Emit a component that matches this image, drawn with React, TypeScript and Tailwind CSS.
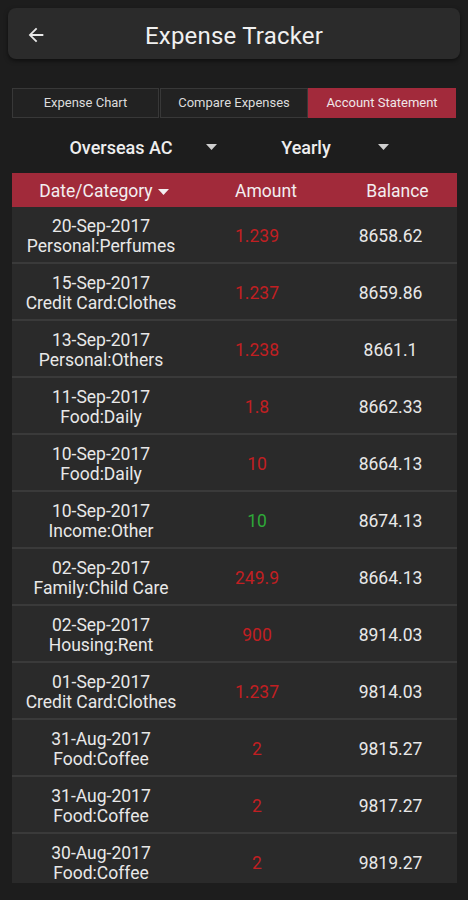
import React from 'react';

const rows = [
  { date: '20-Sep-2017', cat: 'Personal:Perfumes', amount: '1.239', income: false, balance: '8658.62' },
  { date: '15-Sep-2017', cat: 'Credit Card:Clothes', amount: '1.237', income: false, balance: '8659.86' },
  { date: '13-Sep-2017', cat: 'Personal:Others', amount: '1.238', income: false, balance: '8661.1' },
  { date: '11-Sep-2017', cat: 'Food:Daily', amount: '1.8', income: false, balance: '8662.33' },
  { date: '10-Sep-2017', cat: 'Food:Daily', amount: '10', income: false, balance: '8664.13' },
  { date: '10-Sep-2017', cat: 'Income:Other', amount: '10', income: true, balance: '8674.13' },
  { date: '02-Sep-2017', cat: 'Family:Child Care', amount: '249.9', income: false, balance: '8664.13' },
  { date: '02-Sep-2017', cat: 'Housing:Rent', amount: '900', income: false, balance: '8914.03' },
  { date: '01-Sep-2017', cat: 'Credit Card:Clothes', amount: '1.237', income: false, balance: '9814.03' },
  { date: '31-Aug-2017', cat: 'Food:Coffee', amount: '2', income: false, balance: '9815.27' },
  { date: '31-Aug-2017', cat: 'Food:Coffee', amount: '2', income: false, balance: '9817.27' },
  { date: '30-Aug-2017', cat: 'Food:Coffee', amount: '2', income: false, balance: '9819.27' },
];

const Caret = ({ className }: { className?: string }) => (
  <svg width="11" height="6" viewBox="0 0 11 6" className={className}>
    <path d="M0 0 L11 0 L5.5 6 Z" fill="currentColor" />
  </svg>
);

export default function App() {
  return (
    <div
      className="w-[468px] h-[900px] bg-[#1d1d1d] text-[#e8e8e8] overflow-hidden"
      style={{ fontFamily: 'Roboto, "Liberation Sans", sans-serif' }}
    >
      {/* toolbar */}
      <div className="pt-[8px] px-[8px]">
        <div className="h-[51px] rounded-[8px] bg-[#2b2b2b] shadow-[0_2px_4px_rgba(0,0,0,0.5)] flex items-center relative">
          <svg width="22" height="22" viewBox="0 0 24 24" className="ml-[17px] mt-[2px] text-[#e8e8e8]">
            <path d="M20 11H7.83l5.59-5.59L12 4l-8 8 8 8 1.41-1.41L7.83 13H20v-2z" fill="currentColor" />
          </svg>
          <div className="absolute inset-0 pt-[4px] flex items-center justify-center text-[24px] text-[#f0f0f0] tracking-[0.2px]">
            Expense Tracker
          </div>
        </div>
      </div>

      {/* tabs */}
      <div className="mt-[29px] mx-[12px] flex h-[30px] text-[13px]">
        <div className="w-[147px] flex items-center justify-center border border-[#383838] bg-[#222222] text-[#dcdcdc]">
          Expense Chart
        </div>
        <div className="w-[148px] ml-[1px] flex items-center justify-center border border-[#383838] bg-[#222222] text-[#dcdcdc]">
          Compare Expenses
        </div>
        <div className="flex-1 flex items-center justify-center bg-[#a22a3b] text-[#f0e6e8]">
          Account Statement
        </div>
      </div>

      {/* spinners */}
      <div className="h-[55px] pt-[3px] flex items-center text-[18px] font-medium text-[#eeeeee]">
        <div className="ml-[40px] w-[162px] text-center">Overseas AC</div>
        <Caret className="ml-[4px] text-[#cfcfcf]" />
        <div className="ml-[20px] w-[138px] text-center">Yearly</div>
        <Caret className="ml-[3px] text-[#cfcfcf]" />
      </div>

      {/* table */}
      <div className="mx-[12px] w-[445px] h-[710px] overflow-hidden bg-[#2a2a2a]">
        <div className="h-[34px] pt-[3px] bg-[#a12a3a] flex items-center text-[17.5px] text-[#f3eef0]">
          <div className="w-[178px] flex items-center justify-center pl-[6px]">
            Date/Category
            <Caret className="ml-[5px] text-[#f3eef0]" />
          </div>
          <div className="w-[134px] text-center pl-[18px]">Amount</div>
          <div className="flex-1 text-center pl-[14px]">Balance</div>
        </div>
        {rows.map((r, i) => (
          <div
            key={i}
            className="h-[57px] pt-[3px] flex items-center border-b-2 border-[#3a3a3a] text-[17.5px] leading-[20px]"
          >
            <div className="w-[178px] text-center text-[#e8e8e8]">
              <div>{r.date}</div>
              <div>{r.cat}</div>
            </div>
            <div className={`w-[134px] text-center ${r.income ? 'text-[#2ea838]' : 'text-[#c11f22]'}`}>
              {r.amount}
            </div>
            <div className="flex-1 text-center text-[#e8e8e8]">{r.balance}</div>
          </div>
        ))}
      </div>
    </div>
  );
}
